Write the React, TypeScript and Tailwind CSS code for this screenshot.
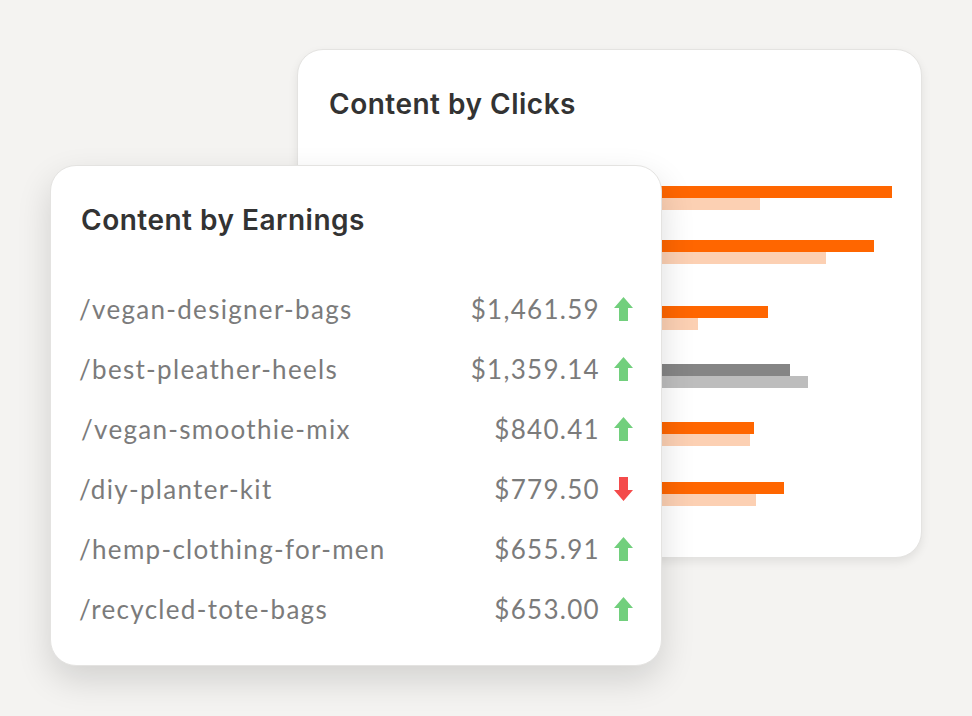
import React from "react";

const rows = [
  { path: "/vegan-designer-bags", price: "$1,461.59", up: true, indent: false },
  { path: "/best-pleather-heels", price: "$1,359.14", up: true, indent: false },
  { path: "/vegan-smoothie-mix", price: "$840.41", up: true, indent: true },
  { path: "/diy-planter-kit", price: "$779.50", up: false, indent: false },
  { path: "/hemp-clothing-for-men", price: "$655.91", up: true, indent: false },
  { path: "/recycled-tote-bags", price: "$653.00", up: true, indent: false },
];

const bars = [
  { mt: "mt-0", a: 563, b: 431, gray: false },
  { mt: "mt-[30px]", a: 545, b: 497, gray: false },
  { mt: "mt-[42px]", a: 439, b: 369, gray: false },
  { mt: "mt-[34px]", a: 461, b: 479, gray: true },
  { mt: "mt-[34px]", a: 425, b: 421, gray: false },
  { mt: "mt-[36px]", a: 455, b: 427, gray: false },
];

function Arrow({ up }: { up: boolean }) {
  return (
    <svg width="19" height="24" viewBox="0 0 19 24" className="shrink-0">
      {up ? (
        <polygon points="9.5,0 19,11 14,11 14,24 5,24 5,11 0,11" fill="#72cf7d" />
      ) : (
        <polygon points="9.5,24 19,13 14,13 14,0 5,0 5,13 0,13" fill="#f44b4b" />
      )}
    </svg>
  );
}

export default function App() {
  return (
    <div className="relative w-[972px] h-[716px] overflow-hidden bg-[#f4f3f1]">
      {/* Back card */}
      <div className="absolute left-[297px] top-[49px] w-[625px] h-[509px] rounded-[26px] bg-white border border-[#e4e3e1] shadow-[0_4px_10px_rgba(0,0,0,0.08)] px-[31px] pt-[38px]">
        <h2
          className="text-[28px] leading-[32px] font-semibold text-[#333333] tracking-[0.5px]"
          style={{ fontFamily: "Inter, 'Noto Sans', sans-serif" }}
        >
          Content by Clicks
        </h2>
        <div className="mt-[66px] flex flex-col">
          {bars.map((bar, i) => (
            <div key={i} className={`flex flex-col ${bar.mt}`}>
              <div
                className={bar.gray ? "h-[12px] bg-[#858585]" : "h-[12px] bg-[#ff6600]"}
                style={{ width: bar.a }}
              />
              <div
                className={bar.gray ? "h-[12px] bg-[#bdbdbd]" : "h-[12px] bg-[#fcd0b3]"}
                style={{ width: bar.b }}
              />
            </div>
          ))}
        </div>
      </div>

      {/* Front card */}
      <div className="absolute left-[50px] top-[165px] w-[612px] h-[501px] rounded-[26px] bg-white border border-[#e4e3e1] shadow-[0_14px_34px_rgba(0,0,0,0.14)] pl-[28px] pr-[28px] pt-[38px]">
        <h2
          className="pl-[2px] text-[28px] leading-[32px] font-semibold text-[#333333] tracking-[0.5px]"
          style={{ fontFamily: "Inter, 'Noto Sans', sans-serif" }}
        >
          Content by Earnings
        </h2>
        <div
          className="mt-[55px] flex flex-col gap-[24px]"
          style={{ fontFamily: "Lato, 'Open Sans', sans-serif" }}
        >
          {rows.map((r) => (
            <div key={r.path} className="flex items-center justify-between h-[36px]">
              <span className={`text-[26px] tracking-[1.3px] text-[#7b7b7b] ${r.indent ? "pl-[2px]" : ""}`}>{r.path}</span>
              <div className="flex items-center gap-[14px]">
                <span className="text-[26px] tracking-[1.3px] text-[#7b7b7b]">{r.price}</span>
                <Arrow up={r.up} />
              </div>
            </div>
          ))}
        </div>
      </div>
    </div>
  );
}
